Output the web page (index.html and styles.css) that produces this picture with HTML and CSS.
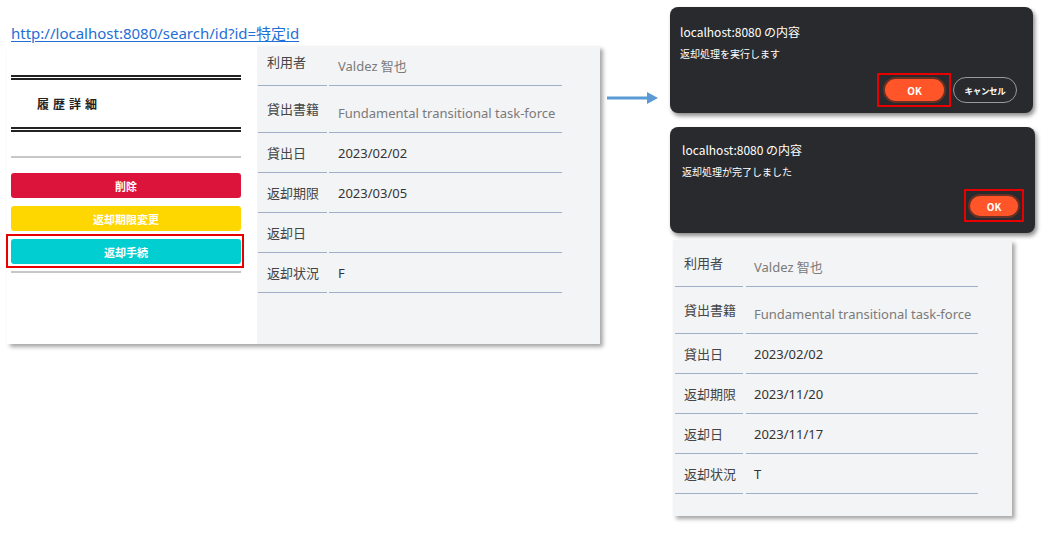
FILE: index.html
```html
<!DOCTYPE html>
<html lang="ja">
<head>
<meta charset="utf-8">
<title>返却手続</title>
<link rel="stylesheet" href="styles.css">
</head>
<body>
<div class="canvas">
  <a class="url" href="#">http://localhost:8080/search/id?id=特定id</a>

  <div class="panel panel-before">
    <div class="side">
      <div class="double-rule"></div>
      <div class="side-title">履歴詳細</div>
      <div class="double-rule"></div>
      <div class="thin-rule"></div>
      <div class="actions">
        <button class="btn btn-delete">削除</button>
        <button class="btn btn-extend">返却期限変更</button>
        <button class="btn btn-return">返却手続</button>
      </div>
      <div class="thin-rule thin-rule-end"></div>
    </div>
    <div class="main">
      <div class="detail detail-cropped">
        <div class="cell label">利用者</div><div class="cell value input muted">Valdez 智也</div>
        <div class="cell label">貸出書籍</div><div class="cell value input muted">Fundamental transitional task-force</div>
        <div class="cell label">貸出日</div><div class="cell value">2023/02/02</div>
        <div class="cell label">返却期限</div><div class="cell value">2023/03/05</div>
        <div class="cell label">返却日</div><div class="cell value"></div>
        <div class="cell label">返却状況</div><div class="cell value">F</div>
      </div>
    </div>
  </div>
  <div class="mark mark-return"></div>

  <svg class="arrow" width="54" height="16" viewBox="0 0 54 16">
    <rect x="1" y="6.5" width="42" height="3" fill="#5b9bd5"/>
    <polygon points="41,2 52,8 41,14" fill="#5b9bd5"/>
  </svg>

  <div class="dialog dialog-confirm">
    <div class="dlg-title">localhost:8080 の内容</div>
    <div class="dlg-msg">返却処理を実行します</div>
    <div class="dlg-buttons">
      <button class="pill pill-ok">OK</button>
      <button class="pill pill-cancel">キャンセル</button>
    </div>
  </div>
  <div class="mark mark-ok1"></div>

  <div class="dialog dialog-done">
    <div class="dlg-title">localhost:8080 の内容</div>
    <div class="dlg-msg">返却処理が完了しました</div>
    <div class="dlg-buttons">
      <button class="pill pill-ok pill-ok-small">OK</button>
    </div>
  </div>
  <div class="mark mark-ok2"></div>

  <div class="panel panel-after">
    <div class="detail">
      <div class="cell label">利用者</div><div class="cell value input muted">Valdez 智也</div>
      <div class="cell label">貸出書籍</div><div class="cell value input muted">Fundamental transitional task-force</div>
      <div class="cell label">貸出日</div><div class="cell value">2023/02/02</div>
      <div class="cell label">返却期限</div><div class="cell value">2023/11/20</div>
      <div class="cell label">返却日</div><div class="cell value">2023/11/17</div>
      <div class="cell label">返却状況</div><div class="cell value">T</div>
    </div>
  </div>
</div>
</body>
</html>
```

FILE: styles.css
```css
* { box-sizing: border-box; }
html, body { margin: 0; padding: 0; background: #ffffff; }
body {
  font-family: "Noto Sans", "Noto Sans CJK JP", sans-serif;
  width: 1044px;
  height: 537px;
  overflow: hidden;
}
.canvas { position: relative; width: 1044px; height: 537px; }

.url {
  position: absolute;
  left: 11px;
  top: 25px;
  font-size: 15px;
  line-height: 17px;
  color: #1f6fd6;
  text-decoration: underline;
  text-underline-offset: 2px;
  white-space: nowrap;
}

/* ---- panels ---- */
.panel {
  position: absolute;
  background: #f3f4f6;
  box-shadow: 3px 3px 4px rgba(0, 0, 0, 0.35);
  overflow: hidden;
}
.panel-before {
  left: 7px; top: 46px; width: 593px; height: 298px;
  display: flex;
}
.panel-after {
  left: 673px; top: 240px; width: 339px; height: 276px;
  padding-left: 2px;
}

.side {
  width: 250px;
  flex: none;
  background: #ffffff;
  padding: 29px 16px 0 4px;
  display: flex;
  flex-direction: column;
}
.double-rule {
  height: 5px;
  border-top: 2px solid #222222;
  border-bottom: 2px solid #222222;
}
.side-title {
  height: 47px;
  display: flex;
  align-items: center;
  padding-left: 26px;
  font-family: "Noto Sans CJK JP", sans-serif;
  font-size: 12px;
  font-weight: 700;
  letter-spacing: 4px;
  color: #222222;
}
.thin-rule {
  height: 2px;
  background: #c7c7c7;
  margin-top: 24px;
}
.thin-rule-end { margin-top: 7px; }
.actions {
  display: flex;
  flex-direction: column;
  gap: 8px;
  margin-top: 15px;
}
.btn {
  height: 25px;
  border: none;
  border-radius: 3px;
  font-family: "Noto Sans CJK JP", sans-serif;
  font-size: 11px;
  font-weight: 700;
  color: #ffffff;
  padding: 0;
}
.btn-delete { background: #dc143c; }
.btn-extend { background: #ffd700; }
.btn-return { background: #00ced1; }

.main { flex: 1; padding-left: 1px; }

.detail {
  display: grid;
  grid-template-columns: 69px 233px;
  grid-template-rows: 47px 47px repeat(4, 40px);
  column-gap: 2px;
}
.panel-after .detail {
  grid-template-columns: 68px 232px;
  column-gap: 3px;
}
.detail-cropped { margin-top: -7px; }
.cell {
  border-bottom: 1px solid #9eafc6;
  display: flex;
  align-items: center;
  padding-left: 9px;
  font-family: "Noto Sans", "Noto Sans CJK JP", sans-serif;
  font-size: 13px;
  white-space: nowrap;
}
.label { color: #454545; padding-bottom: 1px; }
.value { color: #333333; }
.value.input { padding-top: 7px; }
.panel-after .value { padding-left: 8px; }
.muted { color: #7a7a7a; }

/* ---- overlays ---- */
.mark {
  position: absolute;
  border: 2px solid #e80000;
}
.mark-return { left: 6px; top: 234px; width: 238px; height: 34px; }
.mark-ok1 { left: 877px; top: 73px; width: 74px; height: 34px; }
.mark-ok2 { left: 964px; top: 189px; width: 60px; height: 33px; }

.arrow { position: absolute; left: 606px; top: 90px; }

/* ---- dialogs ---- */
.dialog {
  position: absolute;
  background: #292a2d;
  border-radius: 8px;
  box-shadow: 2px 3px 4px rgba(0, 0, 0, 0.45);
  display: flex;
  flex-direction: column;
  padding: 17px 16px 10px 10px;
  font-family: "Noto Sans CJK JP", sans-serif;
  color: #ffffff;
}
.dialog-confirm { left: 670px; top: 7px; width: 363px; height: 106px; }
.dialog-done { left: 670px; top: 127px; width: 365px; height: 106px; padding: 15px 15px 15px 12px; }
.dlg-title { font-size: 12px; line-height: 16px; white-space: nowrap; }
.dlg-msg { font-size: 10px; line-height: 14px; margin-top: 7px; white-space: nowrap; }
.dlg-buttons {
  margin-top: auto;
  display: flex;
  justify-content: flex-end;
  gap: 7px;
}
.pill {
  height: 26px;
  border-radius: 13px;
  font-family: "Noto Sans CJK JP", sans-serif;
  font-weight: 700;
  color: #ffffff;
  padding: 0;
}
.pill-ok {
  width: 63px;
  background: #ff5528;
  border: 2px solid #6a3023;
  font-size: 10px;
}
.pill-ok-small { width: 52px; height: 24px; border-radius: 12px; }
.pill-cancel {
  width: 64px;
  background: transparent;
  border: 1.5px solid #9a9a9a;
  font-size: 8.5px;
  letter-spacing: -0.3px;
}
```
